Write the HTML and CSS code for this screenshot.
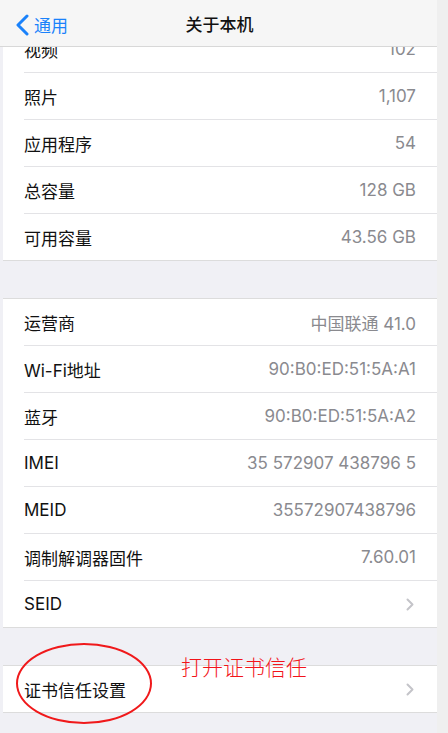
FILE: index.html
```html
<!DOCTYPE html>
<html lang="zh">
<head>
<meta charset="utf-8">
<link rel="stylesheet" href="styles.css">
</head>
<body>
<div class="page">
  <div class="main">
    <header class="nav">
      <div class="back">
        <svg class="back-icon" width="14" height="22" viewBox="0 0 14 22"><path d="M12 2 L3 11 L12 20" fill="none" stroke="#1a82fb" stroke-width="3" stroke-linecap="round" stroke-linejoin="round"/></svg>
        <span>通用</span>
      </div>
      <div class="title">关于本机</div>
    </header>
    <div class="scroll">
      <section class="group first">
        <div class="row"><span class="label">视频</span><span class="value">102</span></div>
        <div class="row"><span class="label">照片</span><span class="value">1,107</span></div>
        <div class="row"><span class="label">应用程序</span><span class="value">54</span></div>
        <div class="row"><span class="label">总容量</span><span class="value">128 GB</span></div>
        <div class="row"><span class="label">可用容量</span><span class="value">43.56 GB</span></div>
      </section>
      <section class="group">
        <div class="row"><span class="label">运营商</span><span class="value">中国联通 41.0</span></div>
        <div class="row"><span class="label">Wi-Fi地址</span><span class="value">90:B0:ED:51:5A:A1</span></div>
        <div class="row"><span class="label">蓝牙</span><span class="value">90:B0:ED:51:5A:A2</span></div>
        <div class="row"><span class="label">IMEI</span><span class="value">35 572907 438796 5</span></div>
        <div class="row"><span class="label">MEID</span><span class="value">35572907438796</span></div>
        <div class="row"><span class="label">调制解调器固件</span><span class="value">7.60.01</span></div>
        <div class="row"><span class="label">SEID</span><svg class="chev" width="8" height="13" viewBox="0 0 8 13"><path d="M1.5 1.5 L6.5 6.5 L1.5 11.5" fill="none" stroke="#c4c4c9" stroke-width="2" stroke-linecap="round" stroke-linejoin="round"/></svg></div>
      </section>
      <section class="group">
        <div class="row cert"><span class="label">证书信任设置</span><svg class="chev" width="8" height="13" viewBox="0 0 8 13"><path d="M1.5 1.5 L6.5 6.5 L1.5 11.5" fill="none" stroke="#c4c4c9" stroke-width="2" stroke-linecap="round" stroke-linejoin="round"/></svg>
          <div class="ring"></div>
          <div class="note">打开证书信任</div>
        </div>
      </section>
    </div>
  </div>
  <div class="edge"></div>
</div>
</body>
</html>
```
FILE: styles.css
```css
html, body {
  margin: 0;
  padding: 0;
  height: 733px;
  overflow: hidden;
}
body {
  font-family: Inter, "Noto Sans CJK SC", sans-serif;
  background: #efefef;
}
.page {
  display: flex;
  width: 448px;
  height: 733px;
}
.main {
  width: 437px;
  height: 733px;
  display: flex;
  flex-direction: column;
  background: #f0f0f5;
  overflow: hidden;
}
.edge {
  flex: 1;
  background: #efefef;
}
.nav {
  position: relative;
  z-index: 2;
  height: 46px;
  flex: none;
  background: #f6f6f6;
  border-bottom: 1px solid #d8d8d8;
  display: flex;
  align-items: center;
  justify-content: center;
}
.back {
  position: absolute;
  left: 15px;
  top: 12px;
  display: flex;
  align-items: center;
  gap: 5px;
  color: #1a82fb;
  font-size: 17px;
  font-family: "Noto Sans CJK SC", sans-serif;
}
.title {
  font-family: "Noto Sans CJK SC", sans-serif;
  font-size: 17px;
  font-weight: 500;
  color: #111;
  margin-left: 2px;
}
.scroll {
  flex: 1;
  padding-left: 3px;
  overflow: hidden;
}
.group {
  background: #fff;
  border-top: 1px solid #dcdcdc;
  border-bottom: 1px solid #dcdcdc;
  margin-top: 37px;
}
.group.first {
  margin-top: -21px;
  border-top: none;
}
.row {
  position: relative;
  height: 47px;
  margin-left: 21px;
  padding-right: 21px;
  display: flex;
  align-items: center;
  justify-content: space-between;
  border-bottom: 1px solid #e3e3e6;
  box-sizing: border-box;
  font-size: 17px;
}
.row:last-child {
  border-bottom: none;
  height: 46px;
}
.label {
  color: #111;
  font-family: Inter, "Noto Sans CJK SC", sans-serif;
}
.value {
  color: #8a8a8f;
  font-family: Inter, "Noto Sans CJK SC", sans-serif;
}
.chev {
  margin-right: 2px;
}
.ring {
  position: absolute;
  left: -8px;
  top: -23px;
  width: 132px;
  height: 77px;
  border: 2px solid #f0191b;
  border-radius: 50%;
}
.note {
  position: absolute;
  left: 157px;
  top: -15px;
  color: #f2141a;
  font-family: "Noto Sans CJK SC", sans-serif;
  font-size: 21px;
  font-weight: 300;
}
```
